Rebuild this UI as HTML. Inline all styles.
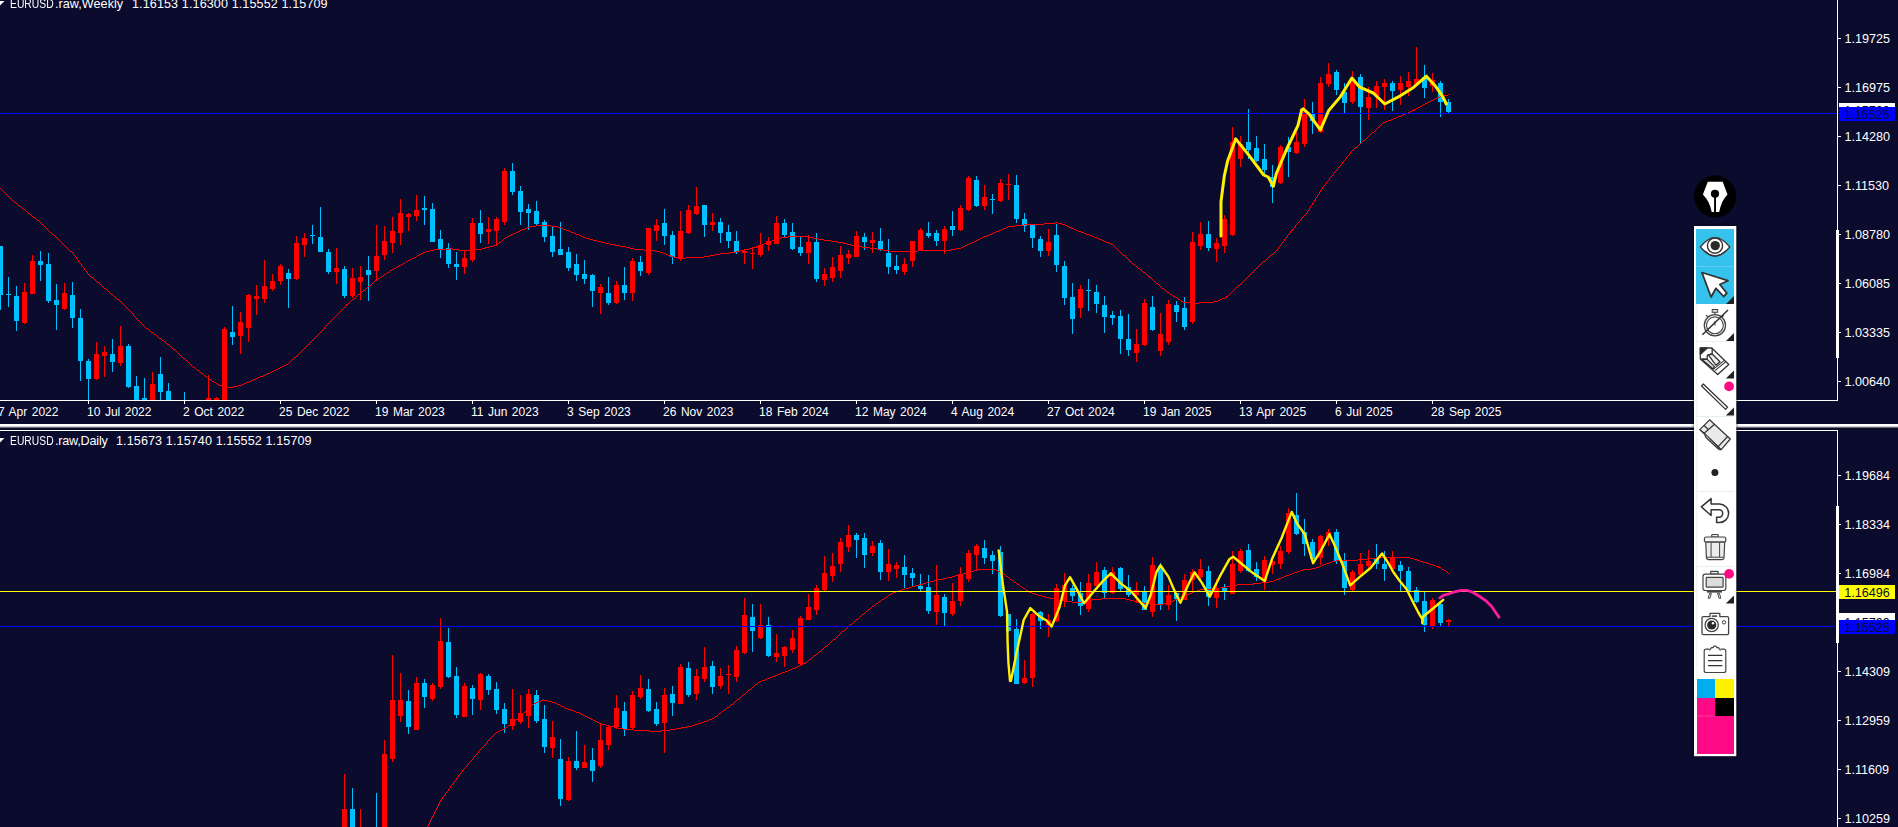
<!DOCTYPE html>
<html><head><meta charset="utf-8"><title>EURUSD.raw</title>
<style>
html,body{margin:0;padding:0;background:#0b0b2d;}
body{width:1898px;height:827px;overflow:hidden;position:relative;font-family:"Liberation Sans",sans-serif;font-size:12px;color:#fff;}
#chart{position:absolute;left:0;top:0;width:1898px;height:827px;}
.tl{position:absolute;top:405px;white-space:nowrap;line-height:14px;font-size:12px;word-spacing:1.2px;margin-left:-1px}
.pl{position:absolute;left:1844.4px;white-space:nowrap;line-height:14px;font-size:12.6px;}
.ttl{position:absolute;left:10px;white-space:pre;line-height:14px;font-size:12.6px;letter-spacing:0.1px;}
.ttl b{font-weight:normal;display:inline-block;transform:scaleX(.82);transform-origin:0 0;letter-spacing:0;}
.ttl u{text-decoration:none;position:absolute;left:45px;top:0;letter-spacing:-0.2px;}
.ttl s{text-decoration:none;position:absolute;top:0;}
.tag{position:absolute;left:1839px;width:56px;height:14px;line-height:16px;color:#0b0b2d;text-indent:5.3px;overflow:hidden;white-space:nowrap;font-size:12.6px;}
#tb{position:absolute;left:1694px;top:226px;width:43px;height:530px;background:#fff;}
#pen{position:absolute;left:1694px;top:175px;width:42px;height:42px;border-radius:50%;background:#000;}
</style></head><body>
<svg id="chart" width="1898" height="827" viewBox="0 0 1898 827">
<defs><clipPath id="cu"><rect x="0" y="0" width="1837" height="400"/></clipPath>
<clipPath id="cl"><rect x="0" y="431" width="1837" height="396"/></clipPath></defs>
<g clip-path="url(#cu)">
<g shape-rendering="crispEdges"><path d="M24 283h1v41h-1zM22 292h5v31h-5zM32 255h1v39h-1zM30 261h5v33h-5zM64 283h1v27h-1zM62 293h5v16h-5zM96 342h1v38h-1zM94 354h5v25h-5zM104 346h1v31h-1zM102 352h5v4h-5zM120 326h1v40h-1zM118 346h5v17h-5zM152 372h1v39h-1zM150 384h5v27h-5zM208 375h1v36h-1zM206 398h5v13h-5zM216 397h1v14h-1zM214 398h5v13h-5zM224 327h1v84h-1zM222 329h5v82h-5zM240 312h1v42h-1zM238 322h5v14h-5zM248 294h1v48h-1zM246 295h5v33h-5zM256 285h1v30h-1zM254 296h5v3h-5zM264 260h1v43h-1zM262 286h5v13h-5zM272 274h1v17h-1zM270 281h5v8h-5zM280 264h1v21h-1zM278 266h5v15h-5zM296 236h1v44h-1zM294 243h5v36h-5zM304 233h1v24h-1zM302 238h5v7h-5zM336 248h1v36h-1zM334 268h5v4h-5zM352 268h1v30h-1zM350 278h5v18h-5zM360 266h1v34h-1zM358 277h5v5h-5zM376 225h1v55h-1zM374 256h5v15h-5zM384 226h1v34h-1zM382 241h5v14h-5zM392 217h1v36h-1zM390 231h5v12h-5zM400 199h1v46h-1zM398 213h5v20h-5zM408 213h1v18h-1zM406 214h5v3h-5zM416 195h1v26h-1zM414 210h5v6h-5zM464 251h1v23h-1zM462 258h5v9h-5zM472 218h1v44h-1zM470 223h5v37h-5zM488 217h1v27h-1zM486 229h5v3h-5zM496 217h1v27h-1zM494 219h5v12h-5zM504 168h1v57h-1zM502 171h5v51h-5zM600 284h1v30h-1zM598 287h5v6h-5zM616 281h1v23h-1zM614 285h5v18h-5zM632 258h1v43h-1zM630 261h5v32h-5zM648 228h1v47h-1zM646 228h5v45h-5zM656 219h1v22h-1zM654 225h5v6h-5zM680 211h1v50h-1zM678 231h5v28h-5zM688 205h1v29h-1zM686 210h5v23h-5zM696 187h1v28h-1zM694 206h5v8h-5zM712 213h1v18h-1zM710 222h5v3h-5zM744 249h1v15h-1zM742 251h5v2h-5zM752 247h1v22h-1zM750 253h5v1h-5zM760 233h1v24h-1zM758 245h5v10h-5zM768 237h1v14h-1zM766 241h5v4h-5zM776 216h1v28h-1zM774 223h5v21h-5zM808 235h1v29h-1zM806 242h5v11h-5zM824 268h1v18h-1zM822 274h5v6h-5zM832 257h1v25h-1zM830 267h5v11h-5zM840 246h1v32h-1zM838 255h5v16h-5zM848 250h1v14h-1zM846 254h5v4h-5zM856 231h1v26h-1zM854 236h5v21h-5zM872 232h1v21h-1zM870 240h5v3h-5zM904 258h1v17h-1zM902 264h5v8h-5zM912 241h1v26h-1zM910 241h5v20h-5zM920 228h1v22h-1zM918 230h5v20h-5zM944 226h1v28h-1zM942 229h5v12h-5zM960 205h1v26h-1zM958 208h5v22h-5zM968 176h1v35h-1zM966 178h5v32h-5zM984 185h1v25h-1zM982 197h5v9h-5zM1000 179h1v23h-1zM998 183h5v18h-5zM1008 174h1v26h-1zM1006 184h5v1h-5zM1048 229h1v27h-1zM1046 242h5v9h-5zM1080 285h1v33h-1zM1078 289h5v19h-5zM1136 329h1v33h-1zM1134 344h5v9h-5zM1144 299h1v47h-1zM1142 303h5v42h-5zM1160 313h1v43h-1zM1158 334h5v17h-5zM1168 300h1v45h-1zM1166 304h5v38h-5zM1192 232h1v92h-1zM1190 242h5v80h-5zM1200 222h1v28h-1zM1198 234h5v12h-5zM1216 238h1v24h-1zM1214 243h5v6h-5zM1224 215h1v38h-1zM1222 219h5v27h-5zM1232 127h1v109h-1zM1230 142h5v93h-5zM1240 136h1v31h-1zM1238 144h5v15h-5zM1280 145h1v39h-1zM1278 147h5v36h-5zM1296 132h1v22h-1zM1294 142h5v11h-5zM1304 99h1v48h-1zM1302 112h5v32h-5zM1320 77h1v56h-1zM1318 83h5v49h-5zM1328 63h1v24h-1zM1326 74h5v10h-5zM1352 71h1v33h-1zM1350 80h5v22h-5zM1368 87h1v33h-1zM1366 97h5v11h-5zM1376 81h1v27h-1zM1374 86h5v10h-5zM1384 79h1v31h-1zM1382 83h5v4h-5zM1400 76h1v29h-1zM1398 83h5v7h-5zM1408 72h1v24h-1zM1406 81h5v6h-5zM1416 47h1v37h-1zM1414 79h5v5h-5zM1432 73h1v19h-1zM1430 80h5v6h-5z" fill="#ff0000"/><path d="M0 246h1v64h-1zM-2 246h5v49h-5zM8 277h1v30h-1zM6 294h5v1h-5zM16 286h1v45h-1zM14 296h5v25h-5zM40 251h1v30h-1zM38 261h5v4h-5zM48 253h1v50h-1zM46 264h5v37h-5zM56 284h1v46h-1zM54 300h5v5h-5zM72 282h1v46h-1zM70 295h5v23h-5zM80 309h1v72h-1zM78 318h5v43h-5zM88 359h1v47h-1zM86 361h5v18h-5zM112 339h1v33h-1zM110 354h5v8h-5zM128 344h1v44h-1zM126 346h5v41h-5zM136 376h1v35h-1zM134 386h5v20h-5zM144 378h1v33h-1zM142 398h5v13h-5zM160 357h1v54h-1zM158 374h5v18h-5zM168 383h1v28h-1zM166 391h5v20h-5zM184 392h1v19h-1zM182 405h5v6h-5zM232 306h1v39h-1zM230 332h5v5h-5zM288 269h1v39h-1zM286 273h5v6h-5zM312 225h1v19h-1zM310 235h5v1h-5zM320 207h1v45h-1zM318 237h5v15h-5zM328 249h1v25h-1zM326 252h5v20h-5zM344 266h1v32h-1zM342 269h5v27h-5zM368 256h1v45h-1zM366 270h5v5h-5zM424 196h1v29h-1zM422 208h5v2h-5zM432 203h1v39h-1zM430 209h5v33h-5zM440 230h1v28h-1zM438 239h5v10h-5zM448 243h1v25h-1zM446 248h5v16h-5zM456 252h1v28h-1zM454 264h5v3h-5zM480 210h1v33h-1zM478 223h5v11h-5zM512 163h1v32h-1zM510 171h5v21h-5zM520 186h1v39h-1zM518 191h5v21h-5zM528 204h1v26h-1zM526 209h5v4h-5zM536 201h1v25h-1zM534 211h5v13h-5zM544 220h1v22h-1zM542 222h5v15h-5zM552 226h1v31h-1zM550 236h5v16h-5zM560 222h1v33h-1zM558 249h5v6h-5zM568 247h1v24h-1zM566 252h5v16h-5zM576 254h1v27h-1zM574 264h5v11h-5zM584 260h1v24h-1zM582 274h5v5h-5zM592 274h1v33h-1zM590 275h5v16h-5zM608 277h1v28h-1zM606 293h5v10h-5zM624 267h1v33h-1zM622 285h5v8h-5zM640 256h1v20h-1zM638 262h5v9h-5zM664 209h1v36h-1zM662 223h5v13h-5zM672 231h1v33h-1zM670 235h5v22h-5zM704 205h1v32h-1zM702 205h5v20h-5zM720 218h1v25h-1zM718 222h5v11h-5zM728 225h1v23h-1zM726 232h5v9h-5zM736 231h1v23h-1zM734 241h5v11h-5zM784 219h1v18h-1zM782 223h5v12h-5zM792 223h1v27h-1zM790 232h5v17h-5zM800 237h1v19h-1zM798 247h5v6h-5zM816 233h1v49h-1zM814 242h5v37h-5zM864 233h1v17h-1zM862 237h5v5h-5zM880 228h1v23h-1zM878 241h5v8h-5zM888 239h1v35h-1zM886 253h5v14h-5zM896 255h1v19h-1zM894 266h5v4h-5zM928 222h1v16h-1zM926 233h5v3h-5zM936 230h1v16h-1zM934 233h5v8h-5zM952 211h1v25h-1zM950 226h5v4h-5zM976 176h1v31h-1zM974 180h5v26h-5zM992 194h1v20h-1zM990 199h5v1h-5zM1016 175h1v48h-1zM1014 185h5v34h-5zM1024 213h1v19h-1zM1022 219h5v7h-5zM1032 225h1v23h-1zM1030 225h5v13h-5zM1040 236h1v21h-1zM1038 239h5v12h-5zM1056 224h1v48h-1zM1054 235h5v30h-5zM1064 261h1v44h-1zM1062 266h5v32h-5zM1072 283h1v51h-1zM1070 297h5v22h-5zM1088 279h1v32h-1zM1086 290h5v1h-5zM1096 285h1v28h-1zM1094 292h5v12h-5zM1104 296h1v37h-1zM1102 305h5v12h-5zM1112 311h1v14h-1zM1110 315h5v3h-5zM1120 310h1v44h-1zM1118 316h5v23h-5zM1128 314h1v42h-1zM1126 339h5v11h-5zM1152 296h1v35h-1zM1150 307h5v23h-5zM1176 301h1v21h-1zM1174 305h5v7h-5zM1184 297h1v33h-1zM1182 308h5v19h-5zM1208 221h1v30h-1zM1206 234h5v14h-5zM1248 109h1v50h-1zM1246 142h5v8h-5zM1256 136h1v26h-1zM1254 148h5v13h-5zM1264 144h1v33h-1zM1262 159h5v11h-5zM1272 165h1v38h-1zM1270 177h5v10h-5zM1288 137h1v40h-1zM1286 147h5v5h-5zM1312 102h1v32h-1zM1310 114h5v7h-5zM1336 70h1v25h-1zM1334 72h5v18h-5zM1344 83h1v31h-1zM1342 92h5v11h-5zM1360 74h1v70h-1zM1358 77h5v30h-5zM1392 81h1v30h-1zM1390 83h5v8h-5zM1424 65h1v33h-1zM1422 77h5v11h-5zM1440 81h1v36h-1zM1438 83h5v19h-5zM1448 99h1v15h-1zM1446 102h5v10h-5z" fill="#00bfff"/></g>
<path d="M1448 94h1v1h-1zM1444 95h4v1h-4zM1440 96h4v1h-4zM1437 97h3v1h-3zM1435 98h2v1h-2zM1433 99h2v1h-2zM1431 100h2v1h-2zM1429 101h2v1h-2zM1427 102h2v1h-2zM1425 103h2v1h-2zM1423 104h2v1h-2zM1422 105h1v1h-1zM1420 106h2v1h-2zM1418 107h2v1h-2zM1416 108h2v1h-2zM1414 109h2v1h-2zM1412 110h3v1h-3zM1410 111h2v1h-2zM1408 112h2v1h-2zM1405 113h3v1h-3zM1403 114h2v1h-2zM1401 115h2v1h-2zM1398 116h3v1h-3zM1396 117h2v1h-2zM1393 118h3v1h-3zM1391 119h2v1h-2zM1388 120h3v1h-3zM1386 121h2v1h-2zM1383 122h3v1h-3zM1382 123h1v1h-1zM1381 124h1v1h-1zM1380 125h1v1h-1zM1379 126h1v1h-1zM1378 127h1v1h-1zM1377 128h1v1h-1zM1376 129h1v1h-1zM1375 130h1v1h-1zM1374 131h1v1h-1zM1372 132h2v1h-2zM1371 133h1v1h-1zM1370 134h1v1h-1zM1369 135h1v1h-1zM1368 136h1v1h-1zM1367 137h1v1h-1zM1366 138h1v1h-1zM1365 139h1v1h-1zM1363 140h2v1h-2zM1362 141h1v1h-1zM1361 142h1v1h-1zM1360 143h1v1h-1zM1359 144h1v1h-1zM1358 145h1v1h-1zM1357 146h1v1h-1zM1355 147h2v1h-2zM1354 148h1v1h-1zM1353 149h1v1h-1zM1352 150h1v1h-1zM1351 151h1v1h-1zM1350 152h1v1h-1zM1350 153h1v1h-1zM1349 154h1v1h-1zM1348 155h1v1h-1zM1347 156h1v1h-1zM1346 157h1v1h-1zM1346 158h1v1h-1zM1345 159h1v1h-1zM1344 160h1v1h-1zM1343 161h1v1h-1zM1342 162h1v1h-1zM1342 163h1v1h-1zM1341 164h1v1h-1zM1340 165h1v1h-1zM1339 166h1v1h-1zM1338 167h1v1h-1zM1337 168h1v1h-1zM1337 169h1v1h-1zM1336 170h1v1h-1zM1335 171h1v1h-1zM1334 172h1v1h-1zM1333 173h1v1h-1zM1333 174h1v1h-1zM1332 175h1v1h-1zM1331 176h1v1h-1zM1330 177h1v1h-1zM1329 178h1v1h-1zM1329 179h1v1h-1zM1328 180h1v1h-1zM1327 181h1v1h-1zM1326 182h1v1h-1zM1326 183h1v1h-1zM1325 184h1v1h-1zM1324 185h1v1h-1zM1323 186h1v1h-1zM1322 187h1v1h-1zM0 188h1v1h-1zM1322 188h1v1h-1zM1 189h1v1h-1zM1321 189h1v1h-1zM2 190h1v1h-1zM1320 190h1v1h-1zM3 191h1v1h-1zM1320 191h1v1h-1zM4 192h1v1h-1zM1319 192h1v1h-1zM5 193h1v1h-1zM1319 193h1v1h-1zM6 194h1v1h-1zM1318 194h1v1h-1zM7 195h1v1h-1zM1317 195h1v1h-1zM8 196h1v1h-1zM1317 196h1v1h-1zM9 197h1v1h-1zM1316 197h1v1h-1zM10 198h1v1h-1zM1315 198h1v1h-1zM11 199h1v1h-1zM1315 199h1v1h-1zM12 200h1v1h-1zM1314 200h1v1h-1zM13 201h1v1h-1zM1314 201h1v1h-1zM14 202h2v1h-2zM1313 202h1v1h-1zM16 203h1v1h-1zM1312 203h1v1h-1zM17 204h1v1h-1zM1312 204h1v1h-1zM18 205h1v1h-1zM1311 205h1v1h-1zM19 206h2v1h-2zM1310 206h1v1h-1zM21 207h1v1h-1zM1310 207h1v1h-1zM22 208h1v1h-1zM1309 208h1v1h-1zM23 209h2v1h-2zM1309 209h1v1h-1zM25 210h1v1h-1zM1308 210h1v1h-1zM26 211h1v1h-1zM1307 211h1v1h-1zM27 212h1v1h-1zM1307 212h1v1h-1zM28 213h2v1h-2zM1306 213h1v1h-1zM30 214h1v1h-1zM1305 214h1v1h-1zM31 215h1v1h-1zM1304 215h1v1h-1zM32 216h1v1h-1zM1303 216h1v1h-1zM33 217h2v1h-2zM1302 217h1v1h-1zM35 218h1v1h-1zM1301 218h1v1h-1zM36 219h1v1h-1zM1301 219h1v1h-1zM37 220h2v1h-2zM1300 220h1v1h-1zM39 221h1v1h-1zM1299 221h1v1h-1zM40 222h1v1h-1zM1055 222h3v1h-3zM1298 222h1v1h-1zM41 223h1v1h-1zM1044 223h11v1h-11zM1058 223h4v1h-4zM1297 223h1v1h-1zM42 224h1v1h-1zM1024 224h20v1h-20zM1062 224h3v1h-3zM1296 224h1v1h-1zM43 225h1v1h-1zM536 225h15v1h-15zM1015 225h9v1h-9zM1065 225h2v1h-2zM1295 225h1v1h-1zM44 226h1v1h-1zM530 226h6v1h-6zM551 226h7v1h-7zM1008 226h7v1h-7zM1067 226h2v1h-2zM1295 226h1v1h-1zM45 227h1v1h-1zM527 227h3v1h-3zM558 227h3v1h-3zM1006 227h2v1h-2zM1069 227h2v1h-2zM1294 227h1v1h-1zM46 228h1v1h-1zM525 228h2v1h-2zM561 228h2v1h-2zM1003 228h3v1h-3zM1071 228h3v1h-3zM1293 228h1v1h-1zM47 229h1v1h-1zM522 229h3v1h-3zM563 229h3v1h-3zM1001 229h2v1h-2zM1074 229h2v1h-2zM1292 229h1v1h-1zM48 230h1v1h-1zM520 230h2v1h-2zM566 230h3v1h-3zM999 230h2v1h-2zM1076 230h2v1h-2zM1291 230h2v1h-2zM49 231h1v1h-1zM518 231h2v1h-2zM569 231h2v1h-2zM996 231h3v1h-3zM1078 231h3v1h-3zM1290 231h1v1h-1zM50 232h1v1h-1zM516 232h2v1h-2zM571 232h3v1h-3zM994 232h2v1h-2zM1081 232h3v1h-3zM1290 232h1v1h-1zM51 233h1v1h-1zM513 233h3v1h-3zM574 233h2v1h-2zM992 233h2v1h-2zM1084 233h2v1h-2zM1289 233h1v1h-1zM52 234h2v1h-2zM511 234h2v1h-2zM576 234h3v1h-3zM989 234h3v1h-3zM1086 234h3v1h-3zM1288 234h1v1h-1zM54 235h1v1h-1zM509 235h2v1h-2zM579 235h2v1h-2zM987 235h2v1h-2zM1089 235h3v1h-3zM1287 235h1v1h-1zM55 236h1v1h-1zM507 236h2v1h-2zM581 236h2v1h-2zM788 236h20v1h-20zM984 236h3v1h-3zM1092 236h2v1h-2zM1287 236h1v1h-1zM56 237h1v1h-1zM506 237h1v1h-1zM583 237h3v1h-3zM781 237h7v1h-7zM808 237h5v1h-5zM982 237h2v1h-2zM1094 237h3v1h-3zM1286 237h1v1h-1zM57 238h1v1h-1zM504 238h2v1h-2zM586 238h3v1h-3zM778 238h3v1h-3zM813 238h5v1h-5zM980 238h2v1h-2zM1097 238h2v1h-2zM1285 238h1v1h-1zM58 239h1v1h-1zM503 239h1v1h-1zM589 239h4v1h-4zM775 239h3v1h-3zM818 239h6v1h-6zM978 239h2v1h-2zM1099 239h3v1h-3zM1284 239h1v1h-1zM59 240h1v1h-1zM502 240h1v1h-1zM593 240h4v1h-4zM772 240h3v1h-3zM824 240h7v1h-7zM976 240h2v1h-2zM1102 240h2v1h-2zM1284 240h1v1h-1zM60 241h1v1h-1zM501 241h1v1h-1zM597 241h4v1h-4zM769 241h3v1h-3zM831 241h6v1h-6zM974 241h2v1h-2zM1104 241h2v1h-2zM1283 241h1v1h-1zM61 242h1v1h-1zM499 242h2v1h-2zM601 242h4v1h-4zM767 242h2v1h-2zM837 242h6v1h-6zM972 242h2v1h-2zM1106 242h3v1h-3zM1282 242h1v1h-1zM62 243h1v1h-1zM498 243h1v1h-1zM605 243h5v1h-5zM764 243h3v1h-3zM843 243h4v1h-4zM969 243h3v1h-3zM1109 243h2v1h-2zM1281 243h1v1h-1zM63 244h1v1h-1zM496 244h2v1h-2zM610 244h5v1h-5zM762 244h2v1h-2zM847 244h4v1h-4zM967 244h2v1h-2zM1111 244h2v1h-2zM1281 244h1v1h-1zM64 245h1v1h-1zM493 245h4v1h-4zM615 245h5v1h-5zM759 245h3v1h-3zM851 245h4v1h-4zM965 245h2v1h-2zM1113 245h1v1h-1zM1280 245h1v1h-1zM65 246h1v1h-1zM489 246h4v1h-4zM620 246h6v1h-6zM756 246h3v1h-3zM855 246h7v1h-7zM963 246h2v1h-2zM1114 246h1v1h-1zM1279 246h1v1h-1zM66 247h1v1h-1zM485 247h4v1h-4zM626 247h4v1h-4zM753 247h4v1h-4zM862 247h8v1h-8zM961 247h2v1h-2zM1115 247h1v1h-1zM1278 247h1v1h-1zM67 248h1v1h-1zM449 248h3v1h-3zM482 248h3v1h-3zM630 248h4v1h-4zM749 248h4v1h-4zM870 248h7v1h-7zM956 248h5v1h-5zM1116 248h1v1h-1zM1278 248h1v1h-1zM68 249h1v1h-1zM434 249h15v1h-15zM452 249h7v1h-7zM474 249h8v1h-8zM634 249h10v1h-10zM744 249h5v1h-5zM877 249h6v1h-6zM951 249h5v1h-5zM1117 249h1v1h-1zM1277 249h1v1h-1zM69 250h1v1h-1zM430 250h4v1h-4zM459 250h15v1h-15zM644 250h11v1h-11zM740 250h4v1h-4zM883 250h6v1h-6zM918 250h26v1h-26zM946 250h5v1h-5zM1118 250h1v1h-1zM1276 250h1v1h-1zM70 251h2v1h-2zM426 251h4v1h-4zM655 251h5v1h-5zM736 251h4v1h-4zM889 251h29v1h-29zM944 251h2v1h-2zM1119 251h1v1h-1zM1275 251h1v1h-1zM72 252h1v1h-1zM423 252h3v1h-3zM660 252h3v1h-3zM729 252h7v1h-7zM1120 252h1v1h-1zM1274 252h1v1h-1zM73 253h1v1h-1zM421 253h2v1h-2zM663 253h3v1h-3zM720 253h9v1h-9zM1121 253h1v1h-1zM1273 253h1v1h-1zM73 254h1v1h-1zM419 254h2v1h-2zM666 254h2v1h-2zM715 254h5v1h-5zM1122 254h1v1h-1zM1271 254h2v1h-2zM74 255h1v1h-1zM417 255h2v1h-2zM668 255h3v1h-3zM710 255h5v1h-5zM1123 255h2v1h-2zM1270 255h1v1h-1zM75 256h1v1h-1zM416 256h1v1h-1zM671 256h3v1h-3zM704 256h6v1h-6zM1125 256h1v1h-1zM1269 256h1v1h-1zM76 257h1v1h-1zM414 257h2v1h-2zM674 257h9v1h-9zM686 257h18v1h-18zM1126 257h1v1h-1zM1268 257h1v1h-1zM76 258h1v1h-1zM412 258h2v1h-2zM683 258h3v1h-3zM1127 258h1v1h-1zM1267 258h1v1h-1zM77 259h1v1h-1zM410 259h2v1h-2zM1128 259h1v1h-1zM1266 259h1v1h-1zM78 260h1v1h-1zM408 260h2v1h-2zM1129 260h1v1h-1zM1265 260h1v1h-1zM78 261h1v1h-1zM406 261h2v1h-2zM1129 261h2v1h-2zM1263 261h2v1h-2zM79 262h1v1h-1zM405 262h1v1h-1zM1131 262h1v1h-1zM1262 262h1v1h-1zM80 263h1v1h-1zM403 263h2v1h-2zM1132 263h1v1h-1zM1261 263h1v1h-1zM81 264h1v1h-1zM401 264h2v1h-2zM1133 264h2v1h-2zM1260 264h1v1h-1zM81 265h1v1h-1zM399 265h2v1h-2zM1135 265h1v1h-1zM1259 265h1v1h-1zM82 266h1v1h-1zM397 266h2v1h-2zM1136 266h1v1h-1zM1258 266h1v1h-1zM83 267h1v1h-1zM396 267h1v1h-1zM1137 267h1v1h-1zM1257 267h1v1h-1zM84 268h1v1h-1zM394 268h2v1h-2zM1138 268h2v1h-2zM1256 268h1v1h-1zM84 269h1v1h-1zM392 269h2v1h-2zM1140 269h1v1h-1zM1255 269h1v1h-1zM85 270h1v1h-1zM390 270h2v1h-2zM1141 270h1v1h-1zM1254 270h1v1h-1zM86 271h1v1h-1zM389 271h1v1h-1zM1142 271h1v1h-1zM1253 271h1v1h-1zM87 272h1v1h-1zM387 272h2v1h-2zM1143 272h2v1h-2zM1252 272h1v1h-1zM87 273h1v1h-1zM386 273h1v1h-1zM1145 273h1v1h-1zM1251 273h1v1h-1zM88 274h1v1h-1zM384 274h2v1h-2zM1146 274h1v1h-1zM1250 274h1v1h-1zM89 275h1v1h-1zM383 275h1v1h-1zM1147 275h1v1h-1zM1249 275h1v1h-1zM90 276h1v1h-1zM381 276h2v1h-2zM1148 276h2v1h-2zM1248 276h1v1h-1zM91 277h2v1h-2zM380 277h1v1h-1zM1149 277h2v1h-2zM1247 277h1v1h-1zM93 278h1v1h-1zM378 278h2v1h-2zM1151 278h1v1h-1zM1246 278h1v1h-1zM94 279h1v1h-1zM377 279h1v1h-1zM1152 279h1v1h-1zM1245 279h1v1h-1zM95 280h1v1h-1zM375 280h2v1h-2zM1153 280h1v1h-1zM1244 280h1v1h-1zM96 281h1v1h-1zM374 281h1v1h-1zM1154 281h1v1h-1zM1243 281h1v1h-1zM97 282h2v1h-2zM373 282h1v1h-1zM1155 282h1v1h-1zM1242 282h1v1h-1zM99 283h1v1h-1zM372 283h1v1h-1zM1156 283h2v1h-2zM1241 283h1v1h-1zM100 284h1v1h-1zM371 284h1v1h-1zM1158 284h1v1h-1zM1240 284h1v1h-1zM101 285h1v1h-1zM369 285h2v1h-2zM1159 285h1v1h-1zM1238 285h2v1h-2zM102 286h1v1h-1zM368 286h1v1h-1zM1160 286h1v1h-1zM1237 286h1v1h-1zM103 287h1v1h-1zM367 287h1v1h-1zM1161 287h1v1h-1zM1236 287h1v1h-1zM104 288h2v1h-2zM366 288h1v1h-1zM1162 288h2v1h-2zM1235 288h1v1h-1zM106 289h1v1h-1zM365 289h1v1h-1zM1164 289h1v1h-1zM1234 289h1v1h-1zM107 290h1v1h-1zM363 290h2v1h-2zM1165 290h1v1h-1zM1233 290h1v1h-1zM108 291h1v1h-1zM362 291h1v1h-1zM1166 291h1v1h-1zM1232 291h1v1h-1zM109 292h1v1h-1zM361 292h1v1h-1zM1167 292h2v1h-2zM1231 292h1v1h-1zM110 293h1v1h-1zM360 293h1v1h-1zM1169 293h1v1h-1zM1230 293h1v1h-1zM111 294h2v1h-2zM358 294h2v1h-2zM1170 294h2v1h-2zM1229 294h1v1h-1zM113 295h1v1h-1zM357 295h1v1h-1zM1172 295h1v1h-1zM1228 295h1v1h-1zM114 296h1v1h-1zM356 296h1v1h-1zM1173 296h2v1h-2zM1226 296h2v1h-2zM115 297h1v1h-1zM355 297h1v1h-1zM1175 297h2v1h-2zM1225 297h2v1h-2zM116 298h1v1h-1zM354 298h1v1h-1zM1177 298h1v1h-1zM1222 298h3v1h-3zM117 299h2v1h-2zM352 299h2v1h-2zM1178 299h2v1h-2zM1220 299h2v1h-2zM119 300h1v1h-1zM351 300h1v1h-1zM1180 300h1v1h-1zM1218 300h2v1h-2zM120 301h1v1h-1zM350 301h1v1h-1zM1181 301h2v1h-2zM1214 301h4v1h-4zM121 302h1v1h-1zM349 302h1v1h-1zM1183 302h7v1h-7zM1199 302h15v1h-15zM122 303h1v1h-1zM348 303h1v1h-1zM1190 303h9v1h-9zM123 304h1v1h-1zM346 304h2v1h-2zM124 305h1v1h-1zM346 305h1v1h-1zM125 306h1v1h-1zM345 306h1v1h-1zM126 307h1v1h-1zM344 307h1v1h-1zM127 308h1v1h-1zM343 308h1v1h-1zM128 309h1v1h-1zM342 309h1v1h-1zM129 310h1v1h-1zM341 310h1v1h-1zM130 311h1v1h-1zM340 311h1v1h-1zM131 312h1v1h-1zM339 312h1v1h-1zM132 313h1v1h-1zM338 313h1v1h-1zM133 314h1v1h-1zM337 314h1v1h-1zM133 315h1v1h-1zM336 315h1v1h-1zM134 316h1v1h-1zM335 316h1v1h-1zM135 317h1v1h-1zM334 317h1v1h-1zM136 318h1v1h-1zM333 318h1v1h-1zM137 319h1v1h-1zM332 319h1v1h-1zM138 320h1v1h-1zM331 320h1v1h-1zM139 321h1v1h-1zM330 321h1v1h-1zM140 322h1v1h-1zM329 322h1v1h-1zM141 323h1v1h-1zM328 323h1v1h-1zM142 324h1v1h-1zM327 324h1v1h-1zM143 325h1v1h-1zM326 325h1v1h-1zM144 326h1v1h-1zM325 326h1v1h-1zM145 327h1v1h-1zM324 327h1v1h-1zM146 328h2v1h-2zM324 328h1v1h-1zM148 329h1v1h-1zM323 329h1v1h-1zM149 330h1v1h-1zM322 330h1v1h-1zM150 331h1v1h-1zM321 331h1v1h-1zM151 332h2v1h-2zM320 332h1v1h-1zM153 333h1v1h-1zM319 333h1v1h-1zM154 334h2v1h-2zM318 334h1v1h-1zM156 335h1v1h-1zM317 335h1v1h-1zM157 336h1v1h-1zM316 336h1v1h-1zM158 337h1v1h-1zM315 337h1v1h-1zM159 338h2v1h-2zM314 338h1v1h-1zM161 339h1v1h-1zM313 339h1v1h-1zM162 340h2v1h-2zM312 340h1v1h-1zM164 341h1v1h-1zM311 341h1v1h-1zM165 342h1v1h-1zM310 342h1v1h-1zM166 343h1v1h-1zM309 343h1v1h-1zM167 344h2v1h-2zM308 344h1v1h-1zM169 345h1v1h-1zM307 345h1v1h-1zM170 346h1v1h-1zM306 346h1v1h-1zM171 347h1v1h-1zM305 347h1v1h-1zM172 348h1v1h-1zM304 348h1v1h-1zM173 349h2v1h-2zM303 349h1v1h-1zM175 350h1v1h-1zM302 350h1v1h-1zM176 351h1v1h-1zM301 351h1v1h-1zM177 352h1v1h-1zM300 352h1v1h-1zM178 353h1v1h-1zM299 353h1v1h-1zM179 354h1v1h-1zM298 354h1v1h-1zM180 355h1v1h-1zM297 355h1v1h-1zM181 356h1v1h-1zM296 356h1v1h-1zM182 357h1v1h-1zM294 357h2v1h-2zM183 358h2v1h-2zM293 358h1v1h-1zM185 359h1v1h-1zM292 359h1v1h-1zM186 360h1v1h-1zM291 360h1v1h-1zM187 361h1v1h-1zM290 361h1v1h-1zM188 362h1v1h-1zM289 362h1v1h-1zM189 363h1v1h-1zM288 363h1v1h-1zM190 364h1v1h-1zM286 364h2v1h-2zM191 365h1v1h-1zM284 365h2v1h-2zM192 366h1v1h-1zM282 366h2v1h-2zM193 367h2v1h-2zM280 367h2v1h-2zM195 368h1v1h-1zM278 368h2v1h-2zM196 369h1v1h-1zM276 369h2v1h-2zM197 370h2v1h-2zM274 370h2v1h-2zM199 371h1v1h-1zM272 371h2v1h-2zM200 372h1v1h-1zM270 372h2v1h-2zM201 373h2v1h-2zM267 373h3v1h-3zM203 374h1v1h-1zM265 374h2v1h-2zM204 375h1v1h-1zM263 375h2v1h-2zM205 376h2v1h-2zM260 376h3v1h-3zM207 377h1v1h-1zM258 377h2v1h-2zM208 378h1v1h-1zM256 378h2v1h-2zM209 379h2v1h-2zM253 379h3v1h-3zM211 380h1v1h-1zM251 380h2v1h-2zM212 381h2v1h-2zM249 381h2v1h-2zM214 382h2v1h-2zM246 382h3v1h-3zM216 383h1v1h-1zM244 383h2v1h-2zM217 384h2v1h-2zM242 384h2v1h-2zM219 385h3v1h-3zM238 385h4v1h-4zM222 386h6v1h-6zM233 386h5v1h-5zM228 387h5v1h-5z" fill="#ff0000" shape-rendering="crispEdges"/>
<rect x="0" y="113" width="1837" height="1" fill="#0000ff" shape-rendering="crispEdges"/>
<polyline points="1221,236 1221,201.6 1224.3,176 1227.6,161 1235.7,138.9 1248.4,154.6 1263.7,175 1268.2,177 1273.3,186.3 1276.3,173.7 1286.5,149.5 1298,125.4 1301.7,109.7 1303.2,108.9 1309.4,114.3 1314.4,121.6 1320.4,129.8 1328.7,110.5 1340.3,96.9 1351.9,78 1359.7,87.2 1373.2,93 1384.8,104 1398.4,96.9 1413.8,87.2 1426.4,76.2 1435.1,85.7 1442.9,96.9 1446.3,104" fill="none" stroke="#fff100" stroke-width="3" stroke-linejoin="round" stroke-linecap="round"/>
</g>
<g clip-path="url(#cl)">
<g shape-rendering="crispEdges"><path d="M344 774h1v57h-1zM342 809h5v22h-5zM360 809h1v22h-1zM358 829h5v2h-5zM384 740h1v91h-1zM382 754h5v77h-5zM392 655h1v107h-1zM390 700h5v59h-5zM400 673h1v49h-1zM398 700h5v16h-5zM416 677h1v53h-1zM414 683h5v47h-5zM432 683h1v18h-1zM430 685h5v14h-5zM440 618h1v71h-1zM438 641h5v46h-5zM464 683h1v34h-1zM462 686h5v31h-5zM480 673h1v37h-1zM478 674h5v26h-5zM512 689h1v41h-1zM510 719h5v7h-5zM520 695h1v29h-1zM518 713h5v9h-5zM528 689h1v39h-1zM526 694h5v22h-5zM552 721h1v37h-1zM550 737h5v11h-5zM568 757h1v44h-1zM566 761h5v39h-5zM584 745h1v23h-1zM582 762h5v6h-5zM600 723h1v45h-1zM598 740h5v26h-5zM608 725h1v25h-1zM606 727h5v18h-5zM616 695h1v34h-1zM614 708h5v19h-5zM632 691h1v38h-1zM630 695h5v33h-5zM640 675h1v24h-1zM638 688h5v9h-5zM664 688h1v65h-1zM662 695h5v28h-5zM680 664h1v40h-1zM678 667h5v37h-5zM696 669h1v31h-1zM694 676h5v18h-5zM704 647h1v35h-1zM702 667h5v12h-5zM720 668h1v21h-1zM718 676h5v10h-5zM728 665h1v29h-1zM726 674h5v1h-5zM736 646h1v36h-1zM734 650h5v27h-5zM744 598h1v56h-1zM742 615h5v38h-5zM760 604h1v35h-1zM758 625h5v13h-5zM776 634h1v28h-1zM774 653h5v4h-5zM784 646h1v21h-1zM782 647h5v9h-5zM792 630h1v23h-1zM790 638h5v12h-5zM800 616h1v49h-1zM798 618h5v46h-5zM808 594h1v26h-1zM806 607h5v13h-5zM816 585h1v30h-1zM814 588h5v22h-5zM824 556h1v35h-1zM822 573h5v17h-5zM832 553h1v29h-1zM830 566h5v10h-5zM840 538h1v34h-1zM838 542h5v22h-5zM848 525h1v27h-1zM846 535h5v12h-5zM872 541h1v15h-1zM870 546h5v7h-5zM888 549h1v32h-1zM886 564h5v8h-5zM896 562h1v16h-1zM894 565h5v4h-5zM936 565h1v60h-1zM934 595h5v17h-5zM952 583h1v33h-1zM950 601h5v13h-5zM960 567h1v39h-1zM958 574h5v27h-5zM968 550h1v32h-1zM966 553h5v26h-5zM976 544h1v26h-1zM974 546h5v9h-5zM1024 660h1v24h-1zM1022 678h5v5h-5zM1032 613h1v74h-1zM1030 614h5v64h-5zM1048 614h1v23h-1zM1046 620h5v5h-5zM1056 584h1v38h-1zM1054 588h5v33h-5zM1064 573h1v34h-1zM1062 585h5v16h-5zM1088 574h1v38h-1zM1086 583h5v26h-5zM1096 562h1v24h-1zM1094 572h5v14h-5zM1112 567h1v27h-1zM1110 572h5v21h-5zM1136 582h1v21h-1zM1134 590h5v5h-5zM1152 557h1v60h-1zM1150 565h5v47h-5zM1168 585h1v25h-1zM1166 595h5v10h-5zM1184 574h1v26h-1zM1182 580h5v20h-5zM1192 569h1v23h-1zM1190 572h5v8h-5zM1200 559h1v22h-1zM1198 569h5v8h-5zM1216 579h1v29h-1zM1214 588h5v10h-5zM1232 551h1v43h-1zM1230 564h5v30h-5zM1240 549h1v24h-1zM1238 551h5v20h-5zM1264 556h1v34h-1zM1262 560h5v21h-5zM1272 557h1v17h-1zM1270 561h5v4h-5zM1280 546h1v23h-1zM1278 551h5v13h-5zM1288 508h1v46h-1zM1286 513h5v39h-5zM1320 535h1v30h-1zM1318 536h5v22h-5zM1328 529h1v17h-1zM1326 532h5v7h-5zM1352 570h1v21h-1zM1350 572h5v18h-5zM1360 553h1v23h-1zM1358 564h5v11h-5zM1368 550h1v19h-1zM1366 561h5v5h-5zM1392 551h1v18h-1zM1390 558h5v11h-5zM1432 598h1v31h-1zM1430 600h5v26h-5zM1448 619h1v8h-1zM1446 620h5v2h-5z" fill="#ff0000"/><path d="M352 788h1v43h-1zM350 809h5v22h-5zM376 793h1v38h-1zM374 829h5v2h-5zM408 690h1v44h-1zM406 701h5v26h-5zM424 679h1v29h-1zM422 683h5v14h-5zM448 628h1v50h-1zM446 642h5v35h-5zM456 667h1v51h-1zM454 676h5v39h-5zM472 685h1v30h-1zM470 688h5v11h-5zM488 674h1v21h-1zM486 676h5v14h-5zM496 682h1v32h-1zM494 689h5v21h-5zM504 703h1v30h-1zM502 709h5v15h-5zM536 690h1v33h-1zM534 695h5v26h-5zM544 705h1v48h-1zM542 719h5v28h-5zM560 739h1v67h-1zM558 759h5v40h-5zM576 731h1v39h-1zM574 761h5v7h-5zM592 748h1v34h-1zM590 760h5v11h-5zM624 702h1v34h-1zM622 711h5v18h-5zM648 679h1v33h-1zM646 689h5v22h-5zM656 702h1v24h-1zM654 709h5v15h-5zM672 686h1v30h-1zM670 694h5v9h-5zM688 662h1v35h-1zM686 668h5v27h-5zM712 661h1v33h-1zM710 666h5v21h-5zM752 604h1v48h-1zM750 617h5v14h-5zM768 617h1v40h-1zM766 625h5v31h-5zM856 533h1v25h-1zM854 535h5v5h-5zM864 533h1v35h-1zM862 538h5v17h-5zM880 540h1v40h-1zM878 543h5v29h-5zM904 555h1v33h-1zM902 567h5v8h-5zM912 568h1v19h-1zM910 573h5v5h-5zM920 574h1v17h-1zM918 586h5v3h-5zM928 575h1v39h-1zM926 587h5v24h-5zM944 594h1v33h-1zM942 597h5v16h-5zM984 540h1v24h-1zM982 548h5v10h-5zM992 551h1v23h-1zM990 555h5v6h-5zM1000 546h1v71h-1zM998 552h5v64h-5zM1008 614h1v18h-1zM1006 614h5v17h-5zM1016 619h1v65h-1zM1014 629h5v55h-5zM1040 611h1v18h-1zM1038 612h5v9h-5zM1072 585h1v16h-1zM1070 588h5v8h-5zM1080 582h1v33h-1zM1078 593h5v13h-5zM1104 567h1v32h-1zM1102 570h5v23h-5zM1120 567h1v24h-1zM1118 568h5v21h-5zM1128 575h1v22h-1zM1126 587h5v8h-5zM1144 586h1v24h-1zM1142 592h5v18h-5zM1160 563h1v47h-1zM1158 566h5v39h-5zM1176 593h1v28h-1zM1174 593h5v6h-5zM1208 566h1v40h-1zM1206 571h5v26h-5zM1224 584h1v16h-1zM1222 588h5v4h-5zM1248 544h1v28h-1zM1246 550h5v21h-5zM1256 562h1v19h-1zM1254 569h5v8h-5zM1296 493h1v42h-1zM1294 515h5v19h-5zM1304 519h1v37h-1zM1302 532h5v12h-5zM1312 539h1v21h-1zM1310 542h5v17h-5zM1336 529h1v35h-1zM1334 532h5v29h-5zM1344 553h1v42h-1zM1342 560h5v28h-5zM1376 544h1v25h-1zM1374 558h5v6h-5zM1384 551h1v30h-1zM1382 564h5v5h-5zM1400 561h1v31h-1zM1398 565h5v6h-5zM1408 567h1v24h-1zM1406 571h5v20h-5zM1416 587h1v16h-1zM1414 590h5v12h-5zM1424 592h1v40h-1zM1422 601h5v24h-5zM1440 602h1v25h-1zM1438 604h5v19h-5z" fill="#00bfff"/></g>
<path d="M1376 557h34v1h-34zM1367 558h9v1h-9zM1410 558h4v1h-4zM1358 559h9v1h-9zM1414 559h3v1h-3zM1336 560h22v1h-22zM1417 560h3v1h-3zM1332 561h4v1h-4zM1420 561h3v1h-3zM1329 562h3v1h-3zM1423 562h4v1h-4zM1326 563h3v1h-3zM1427 563h3v1h-3zM1323 564h3v1h-3zM1430 564h3v1h-3zM1321 565h2v1h-2zM1433 565h3v1h-3zM1319 566h2v1h-2zM1436 566h3v1h-3zM1316 567h3v1h-3zM1438 567h3v1h-3zM1311 568h5v1h-5zM1441 568h1v1h-1zM978 569h18v1h-18zM1303 569h8v1h-8zM1442 569h2v1h-2zM974 570h4v1h-4zM996 570h2v1h-2zM1300 570h3v1h-3zM1444 570h2v1h-2zM970 571h4v1h-4zM998 571h2v1h-2zM1297 571h3v1h-3zM1446 571h1v1h-1zM966 572h4v1h-4zM1000 572h2v1h-2zM1294 572h3v1h-3zM1447 572h1v1h-1zM963 573h3v1h-3zM1002 573h2v1h-2zM1292 573h2v1h-2zM1448 573h1v1h-1zM959 574h4v1h-4zM1004 574h1v1h-1zM1289 574h3v1h-3zM955 575h4v1h-4zM1005 575h1v1h-1zM1286 575h3v1h-3zM952 576h3v1h-3zM1006 576h2v1h-2zM1284 576h2v1h-2zM947 577h5v1h-5zM1008 577h1v1h-1zM1281 577h3v1h-3zM943 578h4v1h-4zM1009 578h1v1h-1zM1279 578h2v1h-2zM938 579h5v1h-5zM1010 579h2v1h-2zM1276 579h3v1h-3zM934 580h4v1h-4zM1012 580h1v1h-1zM1274 580h2v1h-2zM930 581h4v1h-4zM1013 581h1v1h-1zM1269 581h5v1h-5zM926 582h4v1h-4zM1014 582h2v1h-2zM1261 582h8v1h-8zM923 583h3v1h-3zM1016 583h1v1h-1zM1253 583h8v1h-8zM919 584h4v1h-4zM1017 584h2v1h-2zM1237 584h17v1h-17zM915 585h4v1h-4zM1019 585h1v1h-1zM1231 585h6v1h-6zM912 586h3v1h-3zM1020 586h2v1h-2zM1225 586h6v1h-6zM909 587h3v1h-3zM1022 587h1v1h-1zM1220 587h5v1h-5zM905 588h4v1h-4zM1023 588h2v1h-2zM1211 588h9v1h-9zM902 589h3v1h-3zM1025 589h1v1h-1zM1200 589h11v1h-11zM899 590h3v1h-3zM1026 590h2v1h-2zM1197 590h3v1h-3zM896 591h3v1h-3zM1028 591h1v1h-1zM1194 591h3v1h-3zM893 592h3v1h-3zM1029 592h3v1h-3zM1192 592h2v1h-2zM891 593h2v1h-2zM1032 593h3v1h-3zM1189 593h3v1h-3zM889 594h2v1h-2zM1035 594h3v1h-3zM1186 594h3v1h-3zM888 595h1v1h-1zM1038 595h4v1h-4zM1184 595h2v1h-2zM887 596h1v1h-1zM1042 596h3v1h-3zM1181 596h3v1h-3zM885 597h2v1h-2zM1045 597h4v1h-4zM1179 597h2v1h-2zM884 598h1v1h-1zM1049 598h5v1h-5zM1101 598h25v1h-25zM1177 598h2v1h-2zM882 599h2v1h-2zM1054 599h5v1h-5zM1092 599h9v1h-9zM1126 599h4v1h-4zM1175 599h2v1h-2zM881 600h1v1h-1zM1059 600h6v1h-6zM1087 600h5v1h-5zM1130 600h4v1h-4zM1173 600h2v1h-2zM879 601h2v1h-2zM1065 601h7v1h-7zM1081 601h6v1h-6zM1134 601h4v1h-4zM1171 601h2v1h-2zM878 602h1v1h-1zM1072 602h9v1h-9zM1138 602h6v1h-6zM1169 602h2v1h-2zM876 603h2v1h-2zM1144 603h6v1h-6zM1163 603h6v1h-6zM875 604h1v1h-1zM1150 604h13v1h-13zM874 605h1v1h-1zM872 606h2v1h-2zM871 607h1v1h-1zM870 608h1v1h-1zM868 609h2v1h-2zM867 610h1v1h-1zM866 611h1v1h-1zM865 612h1v1h-1zM864 613h1v1h-1zM862 614h2v1h-2zM861 615h1v1h-1zM860 616h1v1h-1zM859 617h1v1h-1zM858 618h1v1h-1zM856 619h2v1h-2zM855 620h1v1h-1zM854 621h1v1h-1zM853 622h1v1h-1zM852 623h1v1h-1zM850 624h2v1h-2zM849 625h1v1h-1zM848 626h1v1h-1zM847 627h1v1h-1zM846 628h1v1h-1zM845 629h1v1h-1zM844 630h1v1h-1zM842 631h2v1h-2zM841 632h1v1h-1zM840 633h1v1h-1zM839 634h1v1h-1zM838 635h1v1h-1zM837 636h1v1h-1zM836 637h1v1h-1zM835 638h1v1h-1zM833 639h2v1h-2zM832 640h1v1h-1zM831 641h1v1h-1zM830 642h1v1h-1zM829 643h1v1h-1zM828 644h1v1h-1zM827 645h1v1h-1zM825 646h2v1h-2zM824 647h1v1h-1zM823 648h1v1h-1zM822 649h1v1h-1zM821 650h1v1h-1zM819 651h2v1h-2zM818 652h1v1h-1zM817 653h1v1h-1zM816 654h1v1h-1zM814 655h2v1h-2zM813 656h1v1h-1zM812 657h1v1h-1zM811 658h1v1h-1zM809 659h2v1h-2zM808 660h1v1h-1zM807 661h1v1h-1zM805 662h2v1h-2zM803 663h3v1h-3zM801 664h2v1h-2zM799 665h2v1h-2zM797 666h2v1h-2zM795 667h2v1h-2zM792 668h3v1h-3zM790 669h2v1h-2zM788 670h2v1h-2zM785 671h3v1h-3zM782 672h3v1h-3zM780 673h2v1h-2zM777 674h3v1h-3zM775 675h2v1h-2zM772 676h3v1h-3zM770 677h2v1h-2zM767 678h3v1h-3zM765 679h2v1h-2zM762 680h3v1h-3zM760 681h2v1h-2zM758 682h2v1h-2zM757 683h1v1h-1zM755 684h2v1h-2zM754 685h1v1h-1zM753 686h1v1h-1zM752 687h1v1h-1zM751 688h1v1h-1zM749 689h2v1h-2zM748 690h1v1h-1zM747 691h1v1h-1zM746 692h1v1h-1zM745 693h1v1h-1zM743 694h2v1h-2zM742 695h1v1h-1zM741 696h1v1h-1zM740 697h1v1h-1zM739 698h1v1h-1zM543 699h1v1h-1zM737 699h2v1h-2zM541 700h2v1h-2zM544 700h4v1h-4zM736 700h1v1h-1zM538 701h3v1h-3zM548 701h4v1h-4zM735 701h1v1h-1zM536 702h2v1h-2zM552 702h3v1h-3zM734 702h1v1h-1zM534 703h2v1h-2zM555 703h2v1h-2zM733 703h1v1h-1zM532 704h2v1h-2zM557 704h3v1h-3zM731 704h2v1h-2zM530 705h2v1h-2zM560 705h1v1h-1zM730 705h1v1h-1zM529 706h1v1h-1zM561 706h3v1h-3zM729 706h1v1h-1zM529 707h1v1h-1zM564 707h1v1h-1zM727 707h2v1h-2zM528 708h1v1h-1zM565 708h3v1h-3zM726 708h1v1h-1zM527 709h1v1h-1zM568 709h3v1h-3zM725 709h1v1h-1zM526 710h1v1h-1zM571 710h3v1h-3zM723 710h2v1h-2zM525 711h1v1h-1zM574 711h2v1h-2zM722 711h1v1h-1zM524 712h1v1h-1zM576 712h3v1h-3zM721 712h1v1h-1zM523 713h1v1h-1zM579 713h2v1h-2zM719 713h2v1h-2zM522 714h1v1h-1zM581 714h2v1h-2zM718 714h1v1h-1zM521 715h1v1h-1zM583 715h2v1h-2zM717 715h1v1h-1zM520 716h1v1h-1zM585 716h2v1h-2zM715 716h2v1h-2zM519 717h1v1h-1zM587 717h2v1h-2zM714 717h1v1h-1zM518 718h1v1h-1zM589 718h2v1h-2zM712 718h2v1h-2zM516 719h2v1h-2zM591 719h2v1h-2zM709 719h3v1h-3zM515 720h1v1h-1zM593 720h2v1h-2zM707 720h2v1h-2zM514 721h1v1h-1zM595 721h2v1h-2zM704 721h3v1h-3zM512 722h2v1h-2zM597 722h2v1h-2zM701 722h3v1h-3zM511 723h1v1h-1zM599 723h3v1h-3zM698 723h3v1h-3zM510 724h1v1h-1zM602 724h4v1h-4zM695 724h3v1h-3zM508 725h2v1h-2zM606 725h4v1h-4zM692 725h3v1h-3zM507 726h1v1h-1zM610 726h4v1h-4zM687 726h5v1h-5zM506 727h1v1h-1zM614 727h4v1h-4zM681 727h6v1h-6zM504 728h2v1h-2zM618 728h5v1h-5zM676 728h5v1h-5zM502 729h2v1h-2zM623 729h11v1h-11zM670 729h6v1h-6zM500 730h2v1h-2zM634 730h15v1h-15zM661 730h9v1h-9zM498 731h2v1h-2zM649 731h12v1h-12zM496 732h2v1h-2zM495 733h1v1h-1zM494 734h1v1h-1zM493 735h1v1h-1zM492 736h1v1h-1zM491 737h1v1h-1zM490 738h1v1h-1zM489 739h1v1h-1zM488 740h1v1h-1zM487 741h1v1h-1zM487 742h1v1h-1zM486 743h1v1h-1zM485 744h1v1h-1zM484 745h1v1h-1zM483 746h1v1h-1zM482 747h1v1h-1zM481 748h1v1h-1zM480 749h1v1h-1zM479 750h1v1h-1zM478 751h1v1h-1zM478 752h1v1h-1zM477 753h1v1h-1zM476 754h1v1h-1zM475 755h1v1h-1zM474 756h1v1h-1zM473 757h1v1h-1zM473 758h1v1h-1zM472 759h1v1h-1zM471 760h1v1h-1zM470 761h1v1h-1zM469 762h1v1h-1zM468 763h1v1h-1zM467 764h1v1h-1zM467 765h1v1h-1zM466 766h1v1h-1zM465 767h1v1h-1zM464 768h1v1h-1zM463 769h1v1h-1zM462 770h1v1h-1zM462 771h1v1h-1zM461 772h1v1h-1zM460 773h1v1h-1zM459 774h1v1h-1zM458 775h1v1h-1zM458 776h1v1h-1zM457 777h1v1h-1zM456 778h1v1h-1zM456 779h1v1h-1zM455 780h1v1h-1zM454 781h1v1h-1zM453 782h1v1h-1zM453 783h1v1h-1zM452 784h1v1h-1zM451 785h1v1h-1zM450 786h1v1h-1zM450 787h1v1h-1zM449 788h1v1h-1zM448 789h1v1h-1zM448 790h1v1h-1zM447 791h1v1h-1zM446 792h1v1h-1zM445 793h1v1h-1zM445 794h1v1h-1zM444 795h1v1h-1zM443 796h1v1h-1zM442 797h1v1h-1zM442 798h1v1h-1zM441 799h1v1h-1zM440 800h1v1h-1zM440 801h1v1h-1zM439 802h1v1h-1zM439 803h1v1h-1zM438 804h1v1h-1zM438 805h1v1h-1zM437 806h1v1h-1zM437 807h1v1h-1zM436 808h1v1h-1zM436 809h1v1h-1zM435 810h1v1h-1zM435 811h1v1h-1zM434 812h1v1h-1zM434 813h1v1h-1zM433 814h1v1h-1zM433 815h1v1h-1zM432 816h1v1h-1zM432 817h1v1h-1zM431 818h1v1h-1zM431 819h1v1h-1zM430 820h1v1h-1zM430 821h1v1h-1zM429 822h1v1h-1zM429 823h1v1h-1zM428 824h1v1h-1zM428 825h1v1h-1zM427 826h1v1h-1zM427 827h1v1h-1zM426 828h1v1h-1zM426 829h1v1h-1zM425 830h1v1h-1z" fill="#ff0000" shape-rendering="crispEdges"/>
<rect x="0" y="591" width="1837" height="1" fill="#ffff00" shape-rendering="crispEdges"/>
<rect x="0" y="626" width="1837" height="1" fill="#0000ff" shape-rendering="crispEdges"/>
<polyline points="998.7,550.5 1003,585.3 1007,611.4 1007.6,642 1008.4,662.5 1010,681 1011,680.8 1016.1,655 1023.7,620 1030.3,608.1 1040,616.8 1046.6,620.5 1051.6,626.6 1059.6,607 1065,585.3 1070,577.2 1077,589.6 1084,603.3 1094.4,590.7 1103.1,580.9 1110.8,573.3 1120.5,583.1 1131.4,591.8 1145.6,608.1 1151,594 1156.4,572.2 1160.4,565.3 1168.4,576.6 1174.9,591.8 1180.4,602.7 1188,585.3 1194.5,572.2 1202.1,583.1 1209.8,596.6 1219.7,576.7 1229.3,559.3 1233.2,556.8 1241,563.2 1252.6,572.8 1264.7,581 1271.9,559.3 1281.6,538 1288.3,520.6 1291.8,511.9 1297,523.5 1304.8,534.2 1309.6,551.6 1313.1,563.2 1320.3,551.6 1329.5,534.2 1335.7,547.7 1343.5,567 1350.2,585.4 1358.9,577.7 1370.5,568 1382.1,553.5 1388,562.6 1393.3,572 1400,581.2 1406.6,589.2 1413.2,602.5 1418.6,613 1422.3,619 1422.3,623 1422.8,617 1430.5,610.5 1437.2,605 1443.2,599.8" fill="none" stroke="#fff100" stroke-width="2.4" stroke-linejoin="round" stroke-linecap="round"/>
<polyline points="1439.8,597.8 1443.8,595.2 1449.1,593.8 1454.5,591.9 1461.1,590.3 1467.1,590.3 1473.1,592.5 1479.7,596.5 1486.4,601.2 1491.7,606.5 1495.7,612.5 1499,617.1" fill="none" stroke="#ff1a9e" stroke-width="2.8" stroke-linejoin="round" stroke-linecap="round"/>
</g>
<g shape-rendering="crispEdges" fill="#fff">
<rect x="0" y="400" width="1838" height="1"/>
<rect x="1837" y="0" width="1" height="401"/>
<rect x="1836" y="230" width="3" height="128"/>
<rect x="0" y="424" width="1898" height="2"/>
<rect x="0" y="426" width="1898" height="1" fill="#d0d0d0"/>
<rect x="0" y="427" width="1898" height="1" fill="#6c6c78"/>
<rect x="0" y="430" width="1838" height="1"/>
<rect x="1837" y="430" width="1" height="397"/>
<rect x="1836" y="506" width="3" height="137"/>
<path d="M88 401h1v3h-1zM184 401h1v3h-1zM280 401h1v3h-1zM376 401h1v3h-1zM472 401h1v3h-1zM568 401h1v3h-1zM664 401h1v3h-1zM760 401h1v3h-1zM856 401h1v3h-1zM952 401h1v3h-1zM1048 401h1v3h-1zM1144 401h1v3h-1zM1240 401h1v3h-1zM1336 401h1v3h-1zM1432 401h1v3h-1zM1838 38h3v1h-3zM1838 87h3v1h-3zM1838 136h3v1h-3zM1838 185h3v1h-3zM1838 234h3v1h-3zM1838 283h3v1h-3zM1838 332h3v1h-3zM1838 381h3v1h-3zM1838 475h3v1h-3zM1838 524h3v1h-3zM1838 573h3v1h-3zM1838 622h3v1h-3zM1838 671h3v1h-3zM1838 720h3v1h-3zM1838 769h3v1h-3zM1838 818h3v1h-3z"/>
<path d="M0 438h4.5L0 442.5z" shape-rendering="auto"/>
<path d="M0 1h4.5L0 5.5z" shape-rendering="auto"/>
</g>
</svg>
<div class="ttl" style="top:-3px"><b>EURUSD</b><u style="letter-spacing:0.05px">.raw,Weekly</u><s style="left:122px">1.16153 1.16300 1.15552 1.15709</s></div>
<div class="ttl" style="top:434px"><b>EURUSD</b><u>.raw,Daily</u><s style="left:106px">1.15673 1.15740 1.15552 1.15709</s></div>
<div class="tl" style="left:-1px">7 Apr 2022</div><div class="tl" style="left:88px">10 Jul 2022</div><div class="tl" style="left:184px">2 Oct 2022</div><div class="tl" style="left:280px">25 Dec 2022</div><div class="tl" style="left:376px">19 Mar 2023</div><div class="tl" style="left:472px">11 Jun 2023</div><div class="tl" style="left:568px">3 Sep 2023</div><div class="tl" style="left:664px">26 Nov 2023</div><div class="tl" style="left:760px">18 Feb 2024</div><div class="tl" style="left:856px">12 May 2024</div><div class="tl" style="left:952px">4 Aug 2024</div><div class="tl" style="left:1048px">27 Oct 2024</div><div class="tl" style="left:1144px">19 Jan 2025</div><div class="tl" style="left:1240px">13 Apr 2025</div><div class="tl" style="left:1336px">6 Jul 2025</div><div class="tl" style="left:1432px">28 Sep 2025</div>
<div class="pl" style="top:32px">1.19725</div><div class="pl" style="top:81px">1.16975</div><div class="pl" style="top:130px">1.14280</div><div class="pl" style="top:179px">1.11530</div><div class="pl" style="top:228px">1.08780</div><div class="pl" style="top:277px">1.06085</div><div class="pl" style="top:326px">1.03335</div><div class="pl" style="top:375px">1.00640</div><div class="pl" style="top:469px">1.19684</div><div class="pl" style="top:518px">1.18334</div><div class="pl" style="top:567px">1.16984</div><div class="pl" style="top:616px">1.15634</div><div class="pl" style="top:665px">1.14309</div><div class="pl" style="top:714px">1.12959</div><div class="pl" style="top:763px">1.11609</div><div class="pl" style="top:812px">1.10259</div>
<div class="tag" style="top:103px;height:4px;background:#fff"><span style="position:relative;top:0px">1.15709</span></div>
<div class="tag" style="top:107px;background:#0000ff">1.15525</div>
<div class="tag" style="top:585px;background:#ffff00">1.16496</div>
<div class="tag" style="top:613px;height:7px;background:#fff"><span style="position:relative;top:2px">1.15709</span></div>
<div class="tag" style="top:620px;background:#0000ff">1.15525</div>
<svg id="tbs" style="position:absolute;left:1690px;top:170px" width="52" height="590" viewBox="1690 170 52 590">
<circle cx="1715.2" cy="196.4" r="21.1" fill="#000"/>
<path d="M1707.8 181.8L1722.7 181.8L1727.5 194.5C1723 199 1720.5 205 1719.2 212L1711.7 212C1710.5 205 1707.5 199 1702.9 194.5Z" fill="#fff"/>
<circle cx="1715" cy="193.8" r="4.1" fill="#000"/>
<rect x="1714.1" y="195" width="1.9" height="17.5" fill="#000"/>
<rect x="1694" y="226" width="42.3" height="530.2" fill="#fff" style="filter:drop-shadow(0 0.5px 1.5px rgba(0,0,12,.8))"/>
<rect x="1696" y="229" width="38" height="75" fill="#35c3ee"/>
<rect x="1696" y="266" width="38" height="1" fill="#5ccdf0"/>
<rect x="1696.5" y="304" width="0.8" height="375" fill="#e9e9e9"/>
<g fill="#e4f3e4"><rect x="1697" y="341" width="37" height="1"/><rect x="1697" y="416" width="37" height="1"/><rect x="1697" y="491" width="37" height="1"/><rect x="1697" y="566" width="37" height="1"/></g>
<g fill="#222"><path d="M1726 304h8v-8z"/><path d="M1726 341h8v-8z"/><path d="M1725.8 378.6h8.2v-8.2z"/><path d="M1725.8 415.6h8.2v-8z"/><path d="M1725.8 603.6h8.2v-8.2z"/></g>
<!-- eye -->
<g stroke="#333" stroke-width="1.4" fill="#fff">
<path d="M1700.4 246.9Q1715 228.3 1729.8 246.9Q1715 265.5 1700.4 246.9Z"/>
<circle cx="1715" cy="245.6" r="7.6"/>
<path d="M1704.5 250.5Q1715 261 1726 250.5" fill="none" stroke-width="1"/>
</g>
<circle cx="1715.2" cy="245.6" r="4.7" fill="#2a2a2a"/>
<!-- cursor -->
<path d="M1701.9 272.5L1728 280.7L1719.8 284.5L1726.9 293.2L1723.7 296.5L1716 288.3L1711.1 297Z" fill="#fff" stroke="#333" stroke-width="1.8" stroke-linejoin="round"/>
<!-- stopwatch -->
<g stroke="#444" fill="none">
<circle cx="1714.9" cy="325.3" r="10.6" stroke-width="1.3"/>
<circle cx="1714.9" cy="325.3" r="8.4" stroke-width="1.1"/>
<rect x="1712.2" y="309.5" width="5.5" height="2.8" fill="#ddd" stroke-width="1"/>
<path d="M1714.9 312.3v2.2M1706 315.2l1.8 1.8M1723.8 315.2l-1.8 1.8M1714.9 321v4.5" stroke-width="1.1"/>
<path d="M1702.4 334.8L1728 310" stroke="#333" stroke-width="1.6"/>
</g>
<!-- highlighter -->
<g stroke="#333" stroke-width="1.3" stroke-linejoin="round">
<path d="M1700.3 348.0L1711.8 348.0L1728.8 364.5L1717.7 374.6L1700.3 359.0Z" fill="#fff"/>
<path d="M1700.3 348.0L1707.2 348.0L1700.3 354.4Z" fill="#222"/>
<path d="M1708.3 354.9L1712.2 354.0L1720.0 361.8L1715.9 365.2Z" fill="#efefef"/>
<path d="M1701.9 359.4L1707.2 359.4L1714.3 366.4L1713.2 368.9Z" fill="#dedede"/>
<path d="M1712.2 348.4L1712.2 354.0L1708.3 354.8L1707.2 355.8L1707.2 359.2L1701.2 358.9" fill="none"/>
<path d="M1724.4 360.4L1713.4 369.1M1725.7 361.9L1714.9 370.6" fill="none" stroke-width="1.1"/>
</g>
<!-- line tool -->
<path d="M1703.3 384L1727.6 407.2L1725.6 409.4L1701.6 386Z" fill="#fff" stroke="#333" stroke-width="1.2" stroke-linejoin="round"/>
<circle cx="1729.1" cy="386.4" r="4.9" fill="#ff0a86"/>
<!-- eraser -->
<g stroke="#333" stroke-width="1.2" stroke-linejoin="round">
<path d="M1709.6 419.8L1730.3 439L1721 449.8L1699.8 429.6Z" fill="#e9e9e9"/>
<path d="M1699.8 429.6L1704.2 433.2L1718.2 446.6L1721 449.8" fill="none"/>
<path d="M1704.2 433.2L1714.5 424.2M1704.2 433.2L1706 437.5L1719.5 450" fill="#d8d8d8"/>
<path d="M1703.8 425.2L1708.3 429.5M1718.2 446.6L1727.6 436.5" fill="none"/>
</g>
<circle cx="1714.9" cy="472.6" r="3.5" fill="#222"/>
<!-- undo -->
<path d="M1701.3 506.8L1711.1 498.6L1711.1 504.1L1719.4 504.1A9.25 9.25 0 0 1 1719.4 522.6L1716.6 522.6L1716.6 517.2L1719 517.2A3.7 3.7 0 0 0 1719 509.8L1711.1 509.8L1711.1 515.5Z" fill="#fff" stroke="#333" stroke-width="1.5" stroke-linejoin="round"/>
<!-- trash -->
<g stroke="#444" stroke-width="1.2" stroke-linejoin="round">
<rect x="1711.7" y="534.5" width="6.5" height="2.5" rx="0.8" fill="#eee"/>
<rect x="1704.4" y="537" width="21.4" height="5.2" rx="1.8" fill="#f3f3f3"/>
<path d="M1705.8 542.2L1724.7 542.2L1724 557.5Q1723.8 559.6 1721.8 559.6L1708.6 559.6Q1706.6 559.6 1706.4 557.5Z" fill="#ededed"/>
<path d="M1711.1 542.5V557M1719.6 542.5V557M1707 557.2H1723.6" fill="none" stroke-width="1"/>
</g>
<!-- easel -->
<g stroke="#444" stroke-width="1.2" stroke-linejoin="round">
<rect x="1710.6" y="571.4" width="7.6" height="2.8" rx="0.8" fill="#e6e6e6"/>
<rect x="1703" y="574.2" width="22.8" height="16.3" rx="2.2" fill="#fff"/>
<rect x="1706.2" y="577.4" width="16.9" height="9.8" rx="0.8" fill="#dcdcdc"/>
<path d="M1706.8 591.8H1722" fill="none" stroke-width="1.6"/>
<path d="M1709.6 593.2L1708.2 598.2L1710 598.2L1711.4 593.2ZM1717.6 593.2L1719 598.2L1720.8 598.2L1719.4 593.2Z" fill="#fff" stroke-width="1"/>
</g>
<circle cx="1729.1" cy="573.9" r="4.9" fill="#ff0a86"/>
<!-- camera -->
<g stroke="#444" stroke-width="1.3" stroke-linejoin="round">
<path d="M1703.4 616.6L1710 616.6L1710 613.4L1719.8 613.4L1719.8 616.6L1727.2 616.6Q1728.6 616.6 1728.6 618L1728.6 633.2Q1728.6 634.6 1727.2 634.6L1703.4 634.6Q1702 634.6 1702 633.2L1702 618Q1702 616.6 1703.4 616.6Z" fill="#fff"/>
<rect x="1711.9" y="615.4" width="5.2" height="1.4" fill="#333" stroke="none"/>
<circle cx="1711.7" cy="625" r="6.6" fill="#fff"/>
<circle cx="1711.7" cy="625" r="4.6" fill="#2a2a2a" stroke="none"/>
<circle cx="1713" cy="623.3" r="1.2" fill="#fff" stroke="none"/>
<circle cx="1724" cy="622.3" r="1.7" fill="#fff" stroke-width="1"/>
</g>
<!-- clipboard -->
<g stroke="#444" stroke-width="1.2" stroke-linejoin="round" fill="none">
<path d="M1709.5 649.2L1706.2 649.2Q1704.2 649.2 1704.2 651.2L1704.2 670.5Q1704.2 672.5 1706.2 672.5L1723.8 672.5Q1725.8 672.5 1725.8 670.5L1725.8 651.2Q1725.8 649.2 1723.8 649.2L1720.5 649.2" fill="#fff"/>
<path d="M1709.5 650.5L1711.5 647.6L1713 647.6Q1715 644 1717 647.6L1718.5 647.6L1720.5 650.5" fill="#fff"/>
<path d="M1708 655.4H1722.4M1708 660.6H1722.4M1708 665.6H1722.4" stroke="#333"/>
</g>
<!-- palette -->
<rect x="1697" y="679" width="18.2" height="19" fill="#00aeef"/>
<rect x="1715.2" y="679" width="18.8" height="19" fill="#fff200"/>
<rect x="1697" y="698" width="37" height="56" fill="#ff0a86"/>
<rect x="1697" y="715.6" width="18.2" height="0.8" fill="#ff4aa3"/>
<rect x="1715.2" y="698" width="18.8" height="18" fill="#000"/>
</svg>

</body></html>
